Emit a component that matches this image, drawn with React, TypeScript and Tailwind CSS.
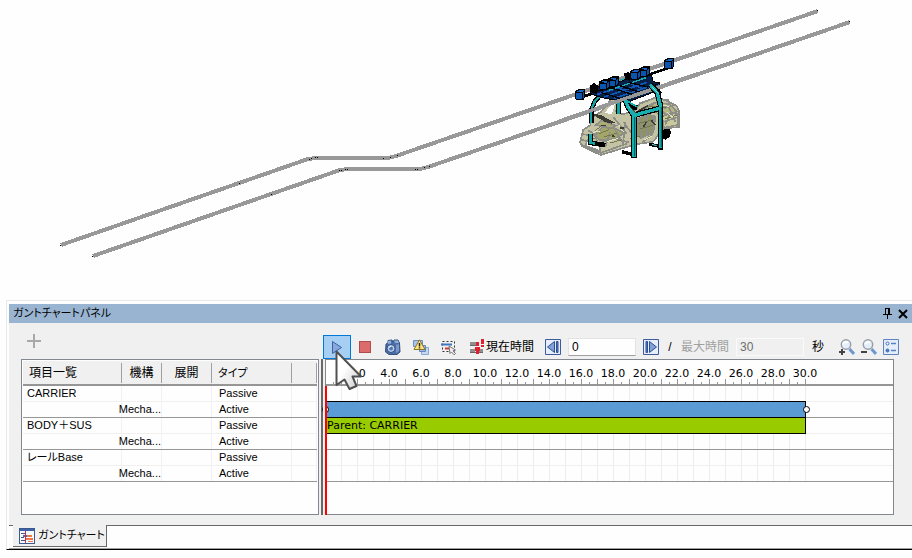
import type { ReactNode } from 'react';

const PX_PER_SECOND = 16;
const DURATION = 30;

const seconds = Array.from({ length: DURATION }, (_, i) => i);
const rulerLabels = Array.from({ length: 15 }, (_, i) => ((i + 1) * 2).toFixed(1));

type Row = {
  name: string;
  mechanism: string;
  type: string;
  bar?: { className: string; label?: string; handles?: boolean };
};

const rows: Row[] = [
  { name: 'CARRIER', mechanism: '', type: 'Passive' },
  { name: '', mechanism: 'Mecha...', type: 'Active', bar: { className: 'bg-[#5b9bd5]', handles: true } },
  { name: 'BODY＋SUS', mechanism: '', type: 'Passive', bar: { className: 'bg-[#99cc00]', label: 'Parent: CARRIER' } },
  { name: '', mechanism: 'Mecha...', type: 'Active' },
  { name: 'レールBase', mechanism: '', type: 'Passive' },
  { name: '', mechanism: 'Mecha...', type: 'Active' },
];

const rowBorder = (i: number) => (i % 2 ? 'border-[#969696]' : 'border-[#f0f0f0]');

const Box3D = ({ x, y }: { x: number; y: number }) => (
  <g>
    <path d={`M${x - 2} ${y + 3}l12 -7h20v25l-6 8h-20l-6 -4z`} fill="#000" />
    <path d={`M${x + 1} ${y + 9}h18v17h-15l-3 -3z`} fill="#0b55ad" />
    <path d={`M${x + 3} ${y + 5}l8 -5h14l-4 6z`} fill="#1263c4" />
    <path d={`M${x + 22} ${y + 8}l5 -4v16l-5 5z`} fill="#0a4fa4" />
  </g>
);

const Carrier = () => (
  <g transform="translate(560 45) scale(0.3333)">
    {/* Car body */}
    <g stroke="#8e8e88" strokeWidth="5" fill="#c9c99c">
      <path d="M60 292L70 254L92 240L88 222L124 200L156 160L176 158L168 200L190 208L226 196L240 176L290 156L320 168L350 182L358 200V246L318 250L300 262L280 290L240 296L200 306L122 330L66 304z" fill="#c4c4a4" />
      <path d="M104 272L128 246L168 252L192 264L166 282L120 286z" fill="#a3a66a" />
      <path d="M108 240L124 226L168 242L156 250z" fill="#a9ac74" />
      <path d="M134 204L160 170L168 166L156 208z" fill="#fefefe" stroke="none" />
      <path d="M246 196L290 172L330 178L350 200L320 212L298 190L272 206z" fill="#b5b780" />
      <path d="M306 214L334 204L354 208V240L312 248z" />
      <path d="M234 222L262 208L286 214L280 262L242 280L230 266z" fill="#8f9262" />
      <path d="M76 302L82 286L116 296L120 318L76 302z" fill="#fefefe" />
      <g fill="none">
        <path d="M64 284L112 296L166 280L206 292M66 300L122 324L200 296M84 256L104 268L122 318M166 256L190 296M190 230L214 264M150 262L136 306M70 268L104 272M160 216L200 266M196 230L190 290" />
        <path d="M236 176L282 160L326 166M246 190L288 172L328 190L346 230M300 180L296 250M312 190L346 180M330 206L316 240M312 230L354 216M240 216L244 276M262 206V270M280 210L276 270M246 292L276 270" />
      </g>
      <path d="M118 266l30 -12M132 276l40 -12M104 258l20 -14M234 236l46 -12M240 252l40 -12M268 184l50 4M276 196l36 20M316 222l34 -12M150 294l36 -10M88 276l16 4M210 282l30 -8" fill="none" stroke="#75784c" strokeWidth="3" />
      <path d="M100 262l20 -4M140 290l34 -10M290 178l36 6M320 200l20 18M176 240l14 20M252 284l24 -10" fill="none" stroke="#e6e6c0" strokeWidth="3" />
    </g>
    <path d="M88 204l34 6l46 24l-34 -4z" fill="#3c3c32" />
    <path d="M124 242h14M132 228l24 6M228 202l36 -20M250 246l10 -16M274 226l12 14M268 206l8 -8M180 248l12 2M156 272l8 4" stroke="#3c3c32" strokeWidth="5" fill="none" />
    <path d="M306 260l6 -8h16l6 10l-6 14l-10 8l-12 -2z" fill="#000" />

    {/* Rear legs */}
    <g fill="none">
      <path d="M128 142l-24 28l-10 24v40M92 268v26l44 6M176 160v46" stroke="#000" strokeWidth="14" />
      <path d="M128 142l-24 28l-10 24v40M92 268v26l14 2M176 160v46" stroke="#12a3a3" strokeWidth="7" />
    </g>

    {/* Drive frame */}
    <path d="M66 156l256 -86" stroke="#000" strokeWidth="8" />
    <path d="M92 130l16 -10l20 10l94 -36l52 -4l6 20l20 4v20l-98 38l-76 -14l-34 -12z" fill="#06204c" stroke="#000" strokeWidth="3" />
    <path d="M112 148l80 -24M132 156l130 -44M162 160l118 -40M170 126l40 18M210 114l34 16" stroke="#1258b4" strokeWidth="5" fill="none" />
    <path d="M146 136l112 -38M180 106l28 -10" stroke="#1badad" strokeWidth="4" fill="none" />
    <path d="M122 142l64 20M150 128l74 22M180 122l60 20M204 112l60 14M104 140l62 -14" stroke="#000" strokeWidth="4" fill="none" />
    <path d="M90 122l12 -8l12 12l-4 22l-20 -8zM192 86l14 -6l8 14l-4 14l-14 -6z" fill="#000" />
    <path d="M286 118l14 -2v20l-14 6z" fill="#0b57b0" stroke="#000" strokeWidth="3" />
    <Box3D x={146} y={98} />
    <Box3D x={119} y={107} />
    <Box3D x={239} y={68} />
    <Box3D x={212} y={76} />
    <Box3D x={46} y={136} />
    <Box3D x={313} y={43} />

    {/* Lower rail crosses in front of the frame */}
    <path d="M0 228L420 84" stroke="#989898" strokeWidth="11" />

    {/* Front legs */}
    <g fill="none" strokeLinejoin="round">
      <path d="M196 166l8 20l18 26v128M270 118l22 26l10 40v130M222 212l24 -8l54 -14M206 184l26 4M276 126l24 22" stroke="#000" strokeWidth="17" />
      <path d="M222 330l-36 -10M300 304l-32 -6" stroke="#000" strokeWidth="10" />
      <path d="M196 166l8 20l18 26v124M270 118l22 26l10 40v126M222 212l24 -8l54 -14" stroke="#17b0b0" strokeWidth="10" />
      <path d="M224 216v118M304 186v120" stroke="#02545a" strokeWidth="3" />
      <path d="M206 184l20 20M276 126l20 20M276 298l14 4" stroke="#6fdcd8" strokeWidth="3" />
    </g>
    <path d="M198 166l34 20" stroke="#17b0b0" strokeWidth="5" />
  </g>
);

const Scene = () => (
  <svg viewBox="0 0 912 300" className="block w-full" shapeRendering="crispEdges" role="img" aria-label="CARRIER">
    <g fill="none" stroke="#989898" strokeWidth="4">
      <path d="M61 245L308 159L316 158H388L396 156L818 11" />
      <path d="M93 256L340 170L348 169H420L428 167L850 22" />
    </g>
    <g fill="#000">
      {[[60, 245], [92, 256], [239, 183], [271, 194], [309, 159], [311, 158], [315, 157], [317, 157], [383, 158], [390, 157], [397, 155], [339, 170], [341, 170], [345, 169], [347, 169], [415, 169], [417, 169], [424, 167], [429, 166], [817, 10], [849, 21]].map(([x, y]) => (
        <rect key={`${x}-${y}`} x={x} y={y} width="1" height="1" />
      ))}
    </g>
    <Carrier />
  </svg>
);

const Pointer = () => (
  <svg width="30" height="44" viewBox="0 0 30 44" className="pointer-events-none absolute left-3 top-3.5 z-10">
    <defs>
      <linearGradient id="pointer" x1="0" y1="0" x2="1" y2="1">
        <stop offset="0.4" stopColor="#fff" />
        <stop offset="1" stopColor="#c8c8c8" />
      </linearGradient>
    </defs>
    <path d="M1.500 2.500V36L9.500 30.500L14.500 40L21.500 37L17.500 27.500H26Z" fill="url(#pointer)" stroke="#505050" strokeWidth="2" strokeLinejoin="round" />
  </svg>
);

const Icon = ({ children }: { children: ReactNode }) => (
  <svg width="16" height="16" viewBox="0 0 16 16" className="block shrink-0" aria-hidden="true">
    {children}
  </svg>
);

const CameraIcon = () => (
  <Icon>
    <path d="M1 5l2 -1V1.500l4 -.5l1 2.500l1 -2.500h4l1.500 3l.5 9l-3 2.500H4L.5 13z" fill="#4b6fa6" stroke="#34507f" />
    <path d="M9 1.500h4l1 2.500h-4zM3 2l3 -.5v3l-3 .5z" fill="#8eaedb" />
    <path d="M11 6l3 -1v7l-3 2z" fill="#7898cb" />
    <circle cx="6" cy="9.500" r="4" fill="#b9cfee" stroke="#2f4c7e" />
    <circle cx="6" cy="9.500" r="2" fill="#5478b2" />
    <path d="M4 8.500l2 -1.500" stroke="#fff" />
  </Icon>
);

const WarningIcon = () => (
  <Icon>
    <path d="M.5 1.500h9v6h-9z" fill="#a9c4ea" stroke="#6d8fc4" />
    <path d="M8.500 8.500h7v7h-7z" fill="#c4d8f3" stroke="#8aa6d2" />
    <path d="M6.500 6.500h6v6h-6z" fill="#9dbbe6" stroke="#6486bd" />
    <path d="M6.500 .8L12 10.500H1z" fill="#ffe680" stroke="#8c7426" strokeLinejoin="round" />
    <path d="M6.500 4v3.500M6.500 8.300v1.200" stroke="#222" strokeWidth="1.500" />
  </Icon>
);

const SelectIcon = () => (
  <Icon>
    <path d="M1.500 2.500h12v10h-12z" fill="none" stroke="#333" strokeDasharray="2 2" />
    <path d="M0 5.500h11" stroke="#3f78c0" strokeWidth="2" />
    <path d="M4 9.500h5" stroke="#d93636" strokeWidth="2" />
    <path d="M8 7l6.500 4l-2.500 .8l2.500 2.700l-1.500 1.300l-2.500 -2.800l-1.500 1.500z" fill="#eee" stroke="#777" />
  </Icon>
);

const CurrentTimeIcon = () => (
  <Icon>
    <g shapeRendering="crispEdges">
      <path d="M0 3h7v4H0zM0 10h5v4H0zM9 10h4v4h-4z" fill="#8f8f8f" />
      <path d="M0 6.500h6M0 13.500h13" stroke="#666" />
      <path d="M6 3h3v4H6zM5 8h5v4H5zM6 12h3v3H6zM11 0h3v5h-3zM11 6h3v2h-3z" fill="#e02030" />
    </g>
  </Icon>
);

const StepIcon = ({ forward }: { forward?: boolean }) => (
  <Icon>
    <path d="M.5 .5h15v15H.5z" fill="#e6eefa" stroke="#3c5a9c" />
    <g transform={forward ? 'translate(16 0) scale(-1 1)' : undefined} stroke="#2f4f94">
      <path d="M9.500 2.500v11L2.500 8z" fill="#7fa0d8" />
      <path d="M11.500 2.500h1.500v11h-1.500z" fill="#5a7cc0" />
    </g>
  </Icon>
);

const MagnifierIcon = ({ plus }: { plus?: boolean }) => (
  <Icon>
    <path d="M10.500 10l4.500 5" stroke="#6e97d2" strokeWidth="3" />
    <circle cx="7" cy="5.500" r="4.700" fill="#e4eff9" stroke="#9a9fa8" strokeWidth="1.500" />
    <path d="M4 5.500a3.500 3.500 0 0 1 5 -2" fill="none" stroke="#fff" strokeWidth="2" />
    <path d={plus ? 'M0 13h6M3 10v6' : 'M0 13h6'} stroke="#444" strokeWidth="2" />
  </Icon>
);

const OptionsIcon = () => (
  <Icon>
    <path d="M.5 .5h15v15H.5z" fill="#e4edfa" stroke="#5f84c0" />
    <circle cx="4.500" cy="4.500" r="1.500" fill="#fff" stroke="#3f6cb4" />
    <circle cx="4.500" cy="11.500" r="1.500" fill="#4f7cc4" stroke="#3f6cb4" />
    <path d="M8 4.500h5M8 11.500h5" stroke="#5a83c4" strokeWidth="1.500" />
  </Icon>
);

const GanttIcon = () => (
  <Icon>
    <g shapeRendering="crispEdges">
      <path d="M.5 .5h15v15H.5z" fill="#f4f7fc" stroke="#3d5a8c" />
      <path d="M1 1h14v2H1z" fill="#3d62a8" />
      <path d="M2 5.500h5M2 9.500h3M2 12.500h5" stroke="#3d5a8c" />
      <path d="M4 7h5v2H4z" fill="#4a6fb0" />
      <path d="M8 7h5v2H8zM7 10h7v2H7zM9 13h5v1H9z" fill="#f07848" />
      <path d="M6.500 3v12" stroke="#d02848" />
    </g>
  </Icon>
);

const ToolButton = ({ label, children }: { label: string; children: ReactNode }) => (
  <button type="button" aria-label={label} className="flex h-6 w-7 shrink-0 items-center justify-center">
    {children}
  </button>
);

const Toolbar = () => (
  <div className="flex h-9 items-end pr-[13px]">
    <div className="w-[314px] shrink-0 self-center pl-[18px]">
      <button type="button" aria-label="追加" className="block">
        <svg width="14" height="14" viewBox="0 0 14 14" className="block">
          <path d="M7 0v14M0 7h14" stroke="#a8a8a8" strokeWidth="2" />
        </svg>
      </button>
    </div>
    <div className="flex items-center">
      <div className="relative">
        <button type="button" aria-label="再生" className="flex h-6 w-7 items-center justify-center border border-[#0078d7] bg-[#a5cff3]">
          <Icon>
            <path d="M3.500 2.500L12.500 8.500L3.500 14.500Z" fill="#86a8de" stroke="#4460a0" />
          </Icon>
        </button>
        <Pointer />
      </div>
      <ToolButton label="停止">
        <span className="size-3 border border-[#b04c4c] bg-[#dc6b6b]" />
      </ToolButton>
      <ToolButton label="カメラ"><CameraIcon /></ToolButton>
      <ToolButton label="干渉"><WarningIcon /></ToolButton>
      <ToolButton label="選択"><SelectIcon /></ToolButton>
    </div>
    <div className="ml-[7px] flex h-6 items-center">
      <CurrentTimeIcon />
      <label htmlFor="current" className="whitespace-nowrap">現在時間</label>
      <button type="button" aria-label="前へ" className="ml-[11px]"><StepIcon /></button>
      <input id="current" defaultValue="0" className="ml-[7px] h-[18px] w-[68px] border border-[#e3e3e3] border-b-[#a0a0a0] bg-[#fefefe] px-[3px] leading-4 outline-none" />
      <button type="button" aria-label="次へ" className="ml-[7px]"><StepIcon forward /></button>
      <span className="w-[22px] text-center">/</span>
      <label htmlFor="max" className="whitespace-nowrap text-[#a0a0a0]">最大時間</label>
      <input id="max" defaultValue="30" disabled className="ml-[7px] h-[18px] w-[68px] border border-[#fafafa] bg-[#f0f0f0] px-[3px] leading-4 text-[#6d6d6d]" />
      <span className="ml-2">秒</span>
    </div>
    <div className="ml-auto flex h-6 items-center gap-1.5">
      <button type="button" aria-label="拡大"><MagnifierIcon plus /></button>
      <button type="button" aria-label="縮小"><MagnifierIcon /></button>
      <button type="button" aria-label="設定"><OptionsIcon /></button>
    </div>
  </div>
);

const ItemTable = () => (
  <div className="w-[298px] shrink-0 border border-[#828790] bg-[#fefefe] p-px">
    <table className="w-full table-fixed border-separate border-spacing-0 text-left">
      <colgroup>
        <col className="w-[99px]" />
        <col className="w-10" />
        <col className="w-[50px]" />
        <col className="w-20" />
        <col />
      </colgroup>
      <thead>
        <tr className="h-[25px]">
          {['項目一覧', '機構', '展開', 'タイプ', ''].map((title, i) => (
            <th key={i} scope="col" className="border-b-2 border-[#969696] bg-[#f0f0f0] p-0 font-normal">
              <div className={`h-5 border-r border-[#a0a0a0] leading-5 ${i === 1 || i === 2 ? 'text-center' : 'pl-1.5'} ${i === 3 ? "text-[11px] [font-feature-settings:'palt']" : ''}`}>{title}</div>
            </th>
          ))}
        </tr>
      </thead>
      <tbody className="text-[11px]">
        {rows.map((row, i) => (
          <tr key={i} className="h-4">
            {[row.name, row.mechanism, '', row.type, ''].map((cell, j) => (
              <td key={j} className={`border-b p-0 ${rowBorder(i)}`}>
                <div className={`flex h-[15px] whitespace-nowrap border-r border-[#f0f0f5] leading-[15px] [font-feature-settings:'palt'] ${j === 1 ? 'justify-end' : j === 3 ? 'pl-[7px]' : 'pl-1'}`}>{cell}</div>
              </td>
            ))}
          </tr>
        ))}
      </tbody>
    </table>
  </div>
);

const Timeline = () => (
  <div className="relative min-w-0 flex-1 border border-[#828790] bg-[#fefefe] font-['DejaVu_Sans',sans-serif] text-[11px]">
    {/* Ruler */}
    <div className="h-[26px] border-b-2 border-[#969696]">
      <div className="flex h-[19px] items-center pl-[15px] pt-2">
        {rulerLabels.map((label) => (
          <span key={label} className="w-8 shrink-0 text-center leading-3">{label}</span>
        ))}
      </div>
      <div className="flex h-[5px] items-end">
        {seconds.map((s) => (
          <div key={s} className="flex h-full w-4 shrink-0 items-end border-r border-[#969696]">
            <div className="h-0.5 w-2 border-r border-[#969696]" />
          </div>
        ))}
      </div>
    </div>

    {rows.map((row, i) => (
      <div key={i} className={`relative flex h-4 border-b ${rowBorder(i)}`}>
        {seconds.map((s) => (
          <div key={s} className="w-4 shrink-0 border-r border-[#ededed]" />
        ))}
        {row.bar && (
          <div
            className={`absolute -left-px -top-px h-[17px] border border-black pl-px leading-4 ${row.bar.className}`}
            style={{ width: DURATION * PX_PER_SECOND + 1 }}
          >
            {row.bar.label}
            {row.bar.handles && (
              <>
                <span className="absolute -left-1 top-1 size-[7px] rounded-full border border-black bg-white" />
                <span className="absolute -right-[5px] top-1 z-10 size-[7px] rounded-full border border-black bg-white" />
              </>
            )}
          </div>
        )}
      </div>
    ))}

    {/* Current time line, with nothing drawn before zero */}
    <div className="absolute -bottom-px -left-[3px] top-[26px] w-1 border-l-2 border-[#f0f0f0] bg-[#ff0000]" />
  </div>
);

const App = () => {
  return (
    <main className="bg-[#fefefe] pb-2 font-['Liberation_Sans','Noto_Sans_CJK_JP',sans-serif] text-xs text-black">
      <Scene />
      <section className="ml-1.5 border-b border-l border-t border-[#e8e8e8] border-b-black pl-0.5 pt-[3px]">
        <header className="flex h-[19px] items-center bg-[#99b4d1] pl-1 pr-1">
          <h1 className="flex-1 text-[11px] [font-feature-settings:'palt']">ガントチャートパネル</h1>
          <button type="button" aria-label="固定" className="mr-1.5">
            <svg width="9" height="11" viewBox="0 0 9 11" className="block" shapeRendering="crispEdges">
              <path d="M2 .5h5M2.500 0v6M0 6.500h9M4.500 7v4" stroke="#000" fill="none" />
              <path d="M5 0h2v6H5z" />
            </svg>
          </button>
          <button type="button" aria-label="閉じる">
            <svg width="10" height="10" viewBox="0 0 10 10" className="block">
              <path d="M1 1l8 8M9 1l-8 8" stroke="#000" strokeWidth="2" />
            </svg>
          </button>
        </header>
        <div className="bg-[#f0f0f0]">
          <Toolbar />
          <div className="flex h-[166px] gap-0.5 pb-2.5 pl-3 pr-[18px]">
            <ItemTable />
            <div className="w-0.5 shrink-0 bg-[#696969]" />
            <Timeline />
          </div>
        </div>
        <nav className="flex h-6 items-start border-b border-[#a0a0a0]">
          <div className="w-1 border-t border-[#696969]" />
          <button type="button" className="flex h-[22px] w-[94px] items-center gap-[3px] whitespace-nowrap border-b border-r border-[#696969] bg-[#f0f0f0] pl-1.5 text-[11px] [font-feature-settings:'palt']">
            <GanttIcon />
            ガントチャート
          </button>
          <div className="flex-1 border-t border-[#696969]" />
        </nav>
      </section>
    </main>
  );
};

export default App;
